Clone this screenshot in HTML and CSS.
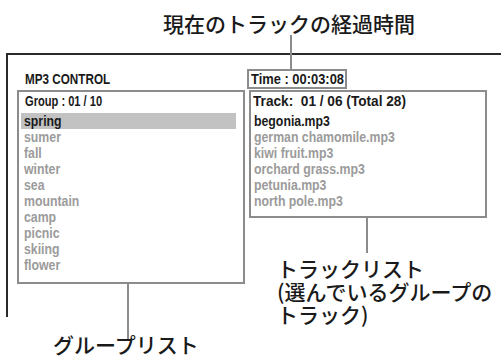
FILE: index.html
```html
<!DOCTYPE html>
<html lang="ja">
<head>
<meta charset="utf-8">
<title>MP3 CONTROL</title>
<link rel="stylesheet" href="styles.css">
</head>
<body>
<div class="page">
  <h1 class="title">現在のトラックの経過時間</h1>
  <div class="screen">
    <div class="screen-head">
      <span class="screen-name"><span class="cond cond-name">MP3 CONTROL</span></span>
      <span class="time"><span class="cond cond-time">Time : 00:03:08</span></span>
    </div>
    <div class="panes">
      <section class="pane pane-group">
        <div class="pane-head"><span class="cond cond-group">Group : 01 / 10</span></div>
        <ul class="list">
          <li class="item item-selected"><span class="cond">spring</span></li>
          <li class="item"><span class="cond">sumer</span></li>
          <li class="item"><span class="cond">fall</span></li>
          <li class="item"><span class="cond">winter</span></li>
          <li class="item"><span class="cond">sea</span></li>
          <li class="item"><span class="cond">mountain</span></li>
          <li class="item"><span class="cond">camp</span></li>
          <li class="item"><span class="cond">picnic</span></li>
          <li class="item"><span class="cond">skiing</span></li>
          <li class="item"><span class="cond">flower</span></li>
        </ul>
      </section>
      <section class="pane pane-track">
        <div class="pane-head"><span class="cond cond-track">Track:&nbsp; 01 / 06 (Total 28)</span></div>
        <ul class="list">
          <li class="item item-current"><span class="cond">begonia.mp3</span></li>
          <li class="item"><span class="cond">german chamomile.mp3</span></li>
          <li class="item"><span class="cond">kiwi fruit.mp3</span></li>
          <li class="item"><span class="cond">orchard grass.mp3</span></li>
          <li class="item"><span class="cond">petunia.mp3</span></li>
          <li class="item"><span class="cond">north pole.mp3</span></li>
        </ul>
      </section>
    </div>
  </div>

  <span class="leader leader-time"></span>
  <span class="leader leader-track"></span>
  <span class="leader leader-group"></span>

  <p class="callout callout-track">トラックリスト<br>(選んでいるグループの<br>トラック)</p>
  <p class="callout callout-group">グループリスト</p>
</div>
</body>
</html>
```

FILE: styles.css
```css
* {
  box-sizing: border-box;
}

html, body {
  margin: 0;
  padding: 0;
  background: #ffffff;
}

.page {
  position: relative;
  width: 501px;
  height: 356px;
  overflow: hidden;
  background: #ffffff;
  color: #1a1a1a;
}

.title {
  margin: 0;
  padding: 11px 0 0 163px;
  height: 35px;
  font-family: "Noto Sans CJK JP", sans-serif;
  font-weight: 500;
  font-size: 21px;
  line-height: 24px;
  color: #1a1a1a;
  white-space: nowrap;
}

.screen {
  margin: 18px 0 0 6px;
  height: 264px;
  border-top: 2px solid #2a2a2a;
  border-left: 2px solid #2a2a2a;
  padding-left: 9px;
  font-family: "Liberation Sans", Arial, sans-serif;
  font-weight: 700;
  font-size: 15px;
}

/* condensed look: the installed sans has no narrow cut */
.cond {
  display: inline-block;
  white-space: nowrap;
  transform: scaleX(0.82);
  transform-origin: 0 0;
}

.cond-name {
  transform: scaleX(0.78);
}

.cond-time {
  transform: scaleX(0.86);
}

.cond-group {
  transform: scaleX(0.74);
}

.cond-track {
  transform: scaleX(0.91);
}

.screen-head {
  display: grid;
  grid-template-columns: 228px 238px;
  column-gap: 4px;
  align-items: start;
  margin-top: 14px;
  height: 20px;
}

.screen-name {
  padding: 2px 0 0 8px;
  line-height: 16px;
  color: #1a1a1a;
}

.time {
  justify-self: start;
  width: 100px;
  margin-left: -2px;
  border: 2px solid #8c8c8c;
  padding: 0 0 0 2px;
  line-height: 16px;
  color: #1a1a1a;
  overflow: hidden;
}

.panes {
  display: grid;
  grid-template-columns: 228px 238px;
  column-gap: 4px;
  align-items: start;
  margin-top: 1px;
}

.pane {
  border: 2px solid #8c8c8c;
}

.pane-group {
  height: 194px;
}

.pane-track {
  height: 128px;
}

.pane-head {
  line-height: 18px;
  height: 18px;
  margin-bottom: 3px;
  color: #1a1a1a;
  white-space: nowrap;
}

.pane-group .pane-head {
  padding-left: 6px;
}

.pane-track .pane-head {
  padding-left: 2px;
}

.list {
  list-style: none;
  margin: 0;
  padding: 0;
}

.item {
  line-height: 16px;
  height: 16px;
  color: #9b9b9b;
  white-space: nowrap;
}

.pane-group .item {
  margin: 0 7px 0 2px;
  padding-left: 3px;
}

.pane-track .item {
  padding-left: 3px;
}

.item-selected {
  background: #c2c2c2;
  color: #1a1a1a;
}

.item-current {
  color: #1a1a1a;
}

.leader {
  position: absolute;
  width: 2px;
  background: #8c8c8c;
}

.leader-time {
  left: 290px;
  top: 35px;
  height: 34px;
}

.leader-track {
  left: 366px;
  top: 218px;
  height: 35px;
}

.leader-group {
  left: 127px;
  top: 284px;
  height: 56px;
}

.callout {
  position: absolute;
  margin: 0;
  font-family: "Noto Sans CJK JP", sans-serif;
  font-weight: 500;
  font-size: 21px;
  line-height: 23px;
  color: #1a1a1a;
  white-space: nowrap;
}

.callout-track {
  left: 277px;
  top: 257px;
}

.callout-group {
  left: 53px;
  top: 334px;
  line-height: 21px;
}
```
